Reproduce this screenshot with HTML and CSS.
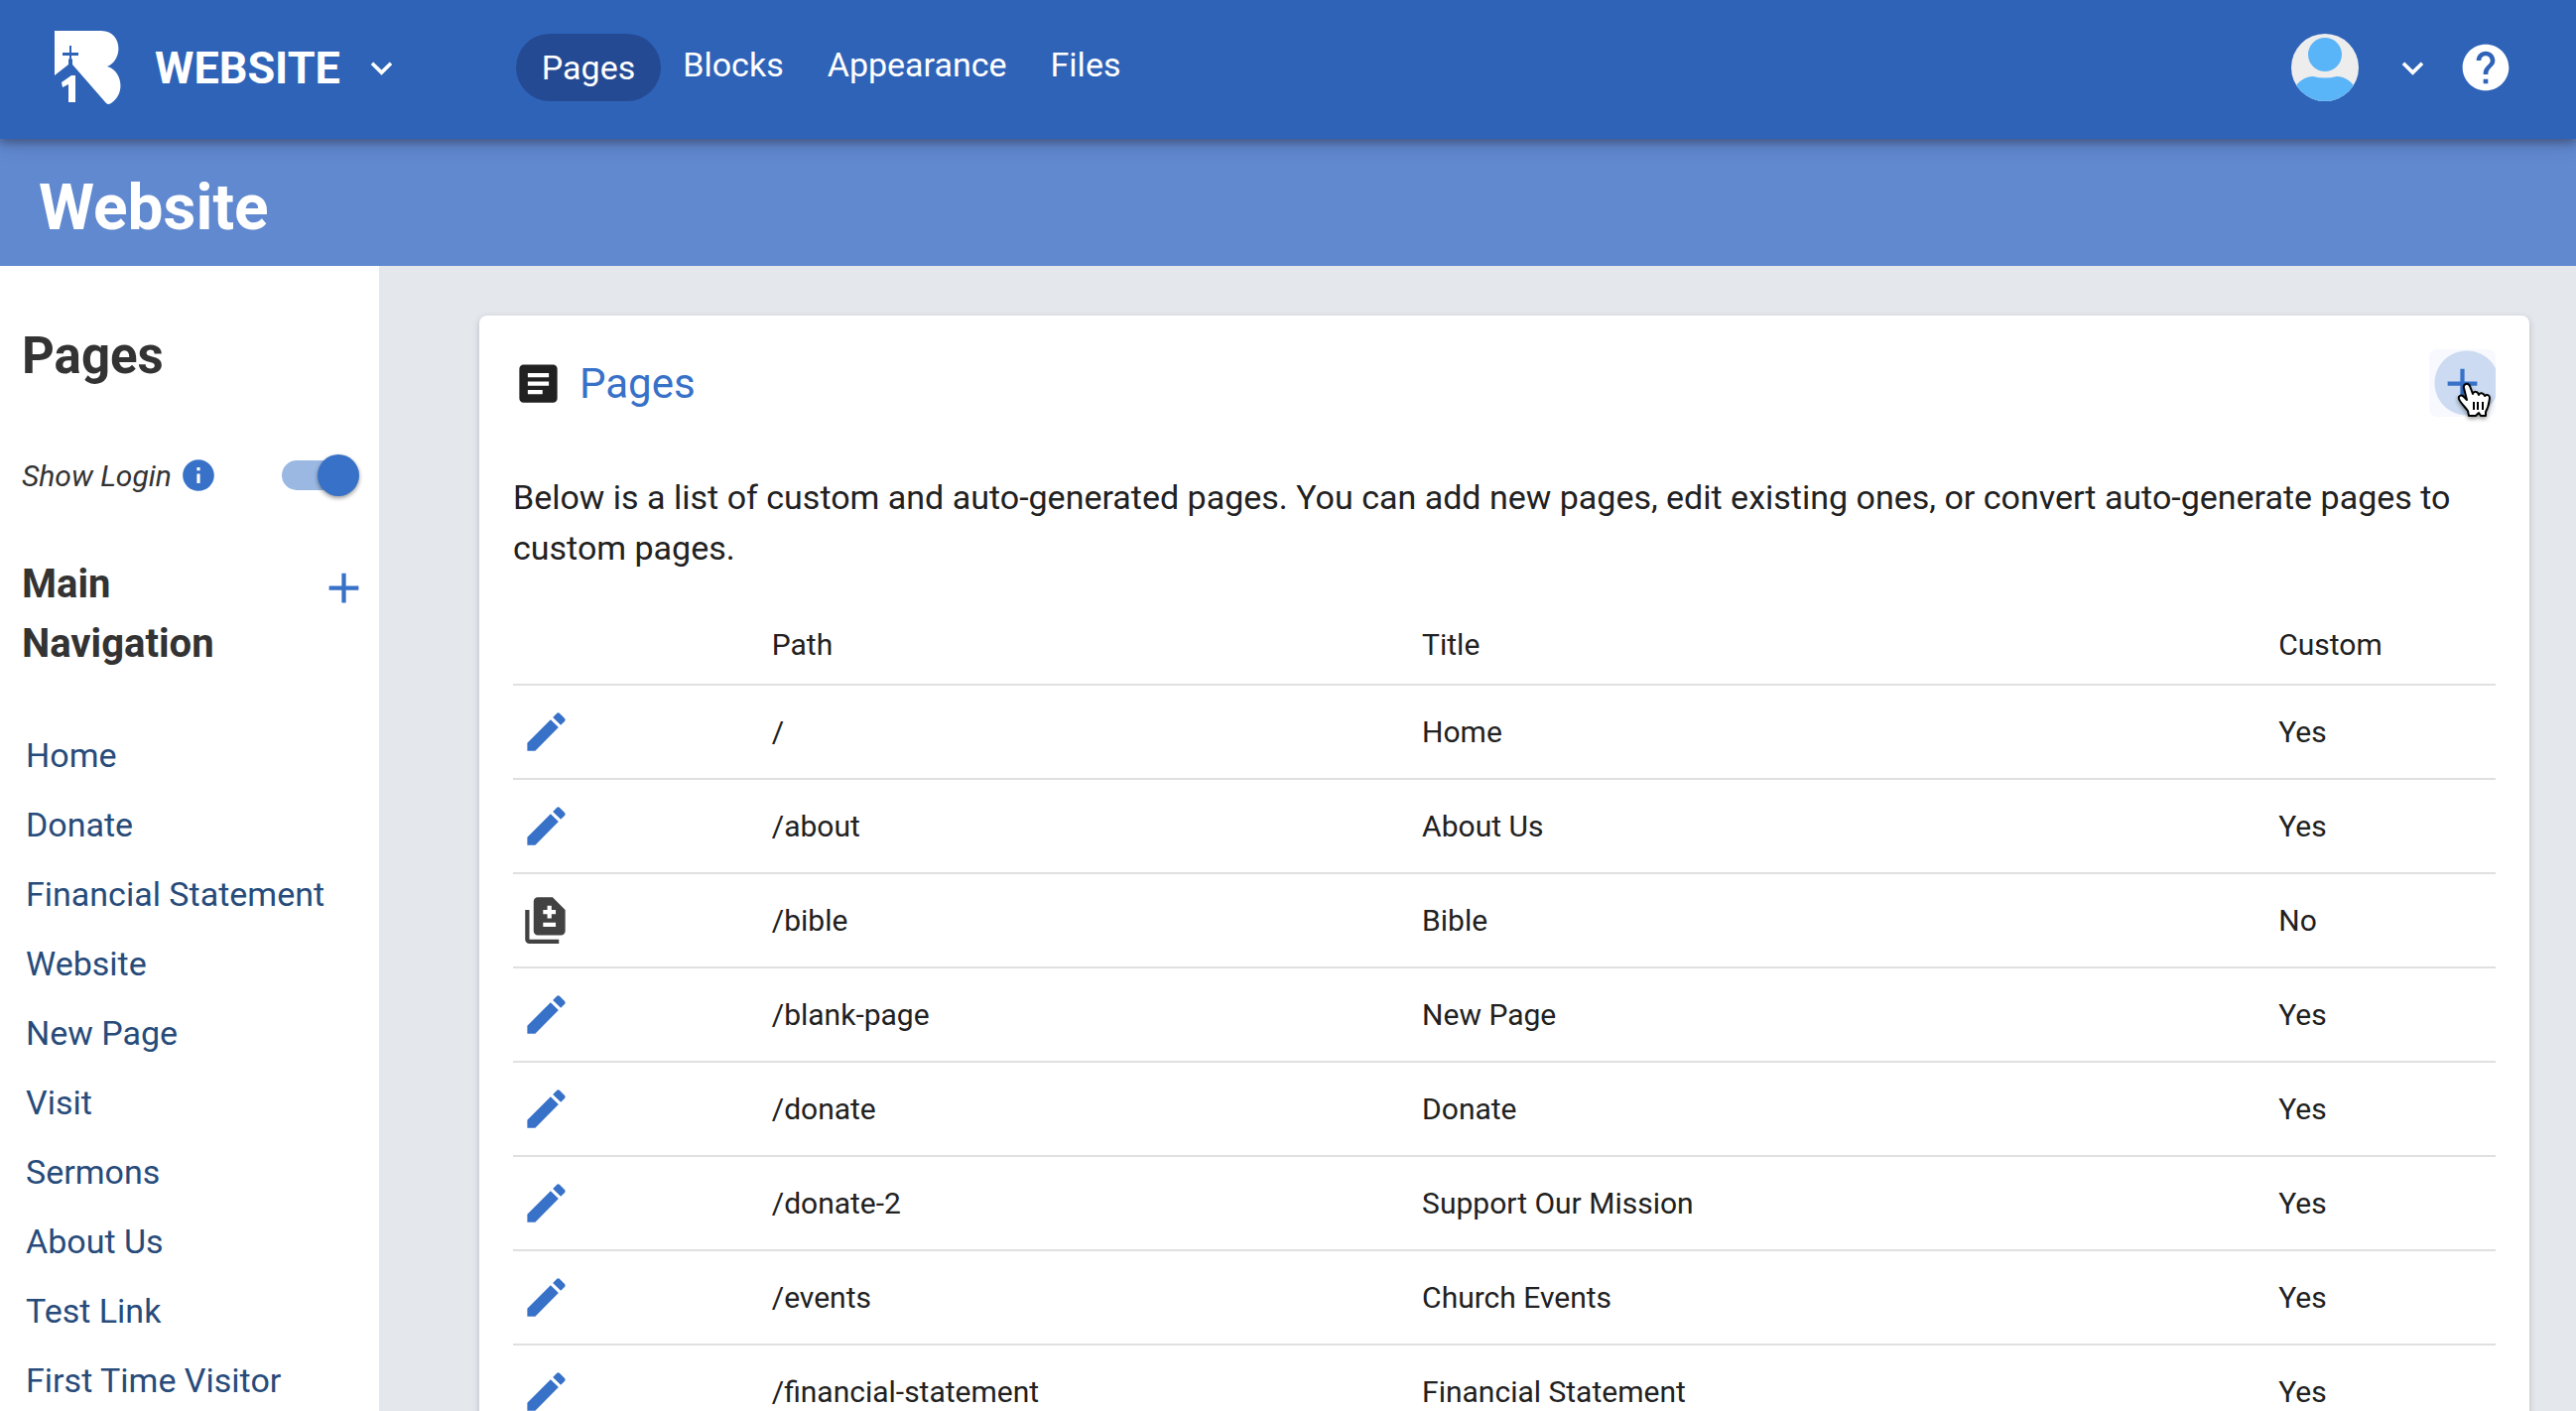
FILE: index.html
```html
<!DOCTYPE html>
<html lang="en">
<head>
<meta charset="utf-8">
<title>Website - Pages</title>
<link rel="stylesheet" href="styles.css">
</head>
<body>
<svg class="sprite" aria-hidden="true">
  <symbol id="edit" viewBox="0 0 24 24"><path d="M3 17.25V21h3.75L17.81 9.94l-3.75-3.75L3 17.25zM20.71 7.04c.39-.39.39-1.02 0-1.41l-2.34-2.34a.9959.9959 0 0 0-1.41 0l-1.83 1.83 3.75 3.75 1.83-1.83z"/></symbol>
  <symbol id="difference" viewBox="0 0 24 24"><path d="M18 23H4c-1.1 0-2-.9-2-2V7h2v14h14v2zM15 1H8c-1.1 0-1.99.9-1.99 2L6 17c0 1.1.89 2 1.99 2H19c1.1 0 2-.9 2-2V7l-6-6zm1.500 14h-6v-2h6v2zm0-6h-2v2h-2V9h-2V7h2V5h2v2h2v2z"/></symbol>
  <symbol id="add" viewBox="0 0 24 24"><path d="M19 13h-6v6h-2v-6H5v-2h6V5h2v6h6v2z"/></symbol>
  <symbol id="chevron" viewBox="0 0 24 24"><path d="M7.410 8.590 12 13.170l4.590-4.580L18 10l-6 6-6-6 1.410-1.410z"/></symbol>
</svg>

<header class="topbar">
  <button class="brand" type="button">
    <svg class="logo" viewBox="0 0 70 76" aria-hidden="true">
      <path fill="#fff" d="M1 1h47c21 0 23 29 6 36 15 4 19 27 4 37q-3 2-5 0L19 35v-5l-2-2-2 2v5L1 46z"/>
      <path fill="#2f63b8" d="M16 16h2v7h7v3h-7v6h-2v-6H9v-3h7z"/>
      <path fill="#fff" d="M22 46v27h-7V55l-6 3-1-5 10-7z"/>
    </svg>
    <span class="brand-name">WEBSITE</span>
    <svg class="icon-chevron" aria-hidden="true"><use href="#chevron"/></svg>
  </button>
  <nav class="tabs" aria-label="Primary">
    <a class="tab tab-active" href="#pages">Pages</a>
    <a class="tab" href="#blocks">Blocks</a>
    <a class="tab" href="#appearance">Appearance</a>
    <a class="tab" href="#files">Files</a>
  </nav>
  <div class="account">
    <button class="user" type="button" aria-label="Account menu">
      <svg class="avatar" viewBox="0 0 68 68" aria-hidden="true">
        <clipPath id="face"><circle cx="34" cy="34" r="34"/></clipPath>
        <g clip-path="url(#face)"><path fill="#ededed" d="M0 0h68v68H0z"/><circle cx="34" cy="21" r="17" fill="#5ab4f8"/><path fill="#5ab4f8" d="M0 60C6 48 14 43 22 43q12 3 24 0c8 0 16 5 22 17v8H0z"/></g>
      </svg>
      <svg class="icon-chevron" aria-hidden="true"><use href="#chevron"/></svg>
    </button>
    <button class="help" type="button" aria-label="Help">
      <svg viewBox="0 0 24 24" aria-hidden="true"><path d="M12 2C6.480 2 2 6.480 2 12s4.480 10 10 10 10-4.480 10-10S17.520 2 12 2zm1 17h-2v-2h2v2zm2.070-7.750-.9.920C13.450 12.900 13 13.500 13 15h-2v-.5c0-1.100.450-2.100 1.170-2.830l1.240-1.260c.37-.36.590-.86.590-1.410 0-1.100-.9-2-2-2s-2 .9-2 2H8c0-2.210 1.790-4 4-4s4 1.790 4 4c0 .88-.36 1.680-.93 2.250z"/></svg>
    </button>
  </div>
</header>

<div class="banner"><h1>Website</h1></div>

<div class="layout">
  <aside class="sidebar">
    <h2>Pages</h2>
    <div class="login-row">
      <label for="show-login">Show Login</label>
      <svg class="icon-info" viewBox="0 0 24 24" aria-hidden="true"><path d="M12 2C6.480 2 2 6.480 2 12s4.480 10 10 10 10-4.480 10-10S17.520 2 12 2zm1 15h-2v-6h2v6zm0-8h-2V7h2v2z"/></svg>
      <input class="switch" id="show-login" type="checkbox" role="switch" checked>
    </div>
    <div class="nav-head">
      <h3>Main Navigation</h3>
      <button class="add-link" type="button" aria-label="Add navigation link"><svg class="icon" aria-hidden="true"><use href="#add"/></svg></button>
    </div>
    <nav class="links" aria-label="Main navigation">
      <a href="#home">Home</a>
      <a href="#donate">Donate</a>
      <a href="#financial">Financial Statement</a>
      <a href="#website">Website</a>
      <a href="#new">New Page</a>
      <a href="#visit">Visit</a>
      <a href="#sermons">Sermons</a>
      <a href="#about">About Us</a>
      <a href="#test">Test Link</a>
      <a href="#first">First Time Visitor</a>
    </nav>
  </aside>

  <main class="content">
    <section class="card">
      <div class="card-head">
        <svg class="icon icon-article" viewBox="0 0 24 24" aria-hidden="true"><path d="M19 3H5c-1.100 0-2 .9-2 2v14c0 1.100.9 2 2 2h14c1.100 0 2-.9 2-2V5c0-1.100-.9-2-2-2zm-5 14H7v-2h7v2zm3-4H7v-2h10v2zm0-4H7V7h10v2z"/></svg>
        <h2>Pages</h2>
        <button class="add-page" type="button" aria-label="Add page">
          <svg class="icon" aria-hidden="true"><use href="#add"/></svg>
          <svg class="pointer" viewBox="0 0 34 38" aria-hidden="true"><path fill="#fff" stroke="#000" stroke-width="2" stroke-linejoin="round" d="M12 34l-1-5C7 24 3 20 2 17c-1-3 2-4 4-3l4 4L7 6C6 2 11 0 13 4l3 8c1-3 5-3 6 1 1-3 5-2 6 1 2-2 5-1 5 2-1 7-1 9-4 14v4h-5l-2-3-3 3z"/><path stroke="#000" stroke-width="2" d="M17 20v8M21 20v8M26 20v8"/></svg>
        </button>
      </div>
      <p class="intro">Below is a list of custom and auto-generated pages. You can add new pages, edit existing ones, or convert auto-generate pages to custom pages.</p>
      <table class="pages">
        <thead><tr><th class="col-action" aria-label="Action"></th><th class="col-path">Path</th><th class="col-title">Title</th><th class="col-custom">Custom</th></tr></thead>
        <tbody>
          <tr><td><button type="button" aria-label="Edit"><svg class="icon"><use href="#edit"/></svg></button></td><td>/</td><td>Home</td><td>Yes</td></tr>
          <tr><td><button type="button" aria-label="Edit"><svg class="icon"><use href="#edit"/></svg></button></td><td>/about</td><td>About Us</td><td>Yes</td></tr>
          <tr><td><button class="convert" type="button" aria-label="Convert"><svg class="icon"><use href="#difference"/></svg></button></td><td>/bible</td><td>Bible</td><td>No</td></tr>
          <tr><td><button type="button" aria-label="Edit"><svg class="icon"><use href="#edit"/></svg></button></td><td>/blank-page</td><td>New Page</td><td>Yes</td></tr>
          <tr><td><button type="button" aria-label="Edit"><svg class="icon"><use href="#edit"/></svg></button></td><td>/donate</td><td>Donate</td><td>Yes</td></tr>
          <tr><td><button type="button" aria-label="Edit"><svg class="icon"><use href="#edit"/></svg></button></td><td>/donate-2</td><td>Support Our Mission</td><td>Yes</td></tr>
          <tr><td><button type="button" aria-label="Edit"><svg class="icon"><use href="#edit"/></svg></button></td><td>/events</td><td>Church Events</td><td>Yes</td></tr>
          <tr><td><button type="button" aria-label="Edit"><svg class="icon"><use href="#edit"/></svg></button></td><td>/financial-statement</td><td>Financial Statement</td><td>Yes</td></tr>
        </tbody>
      </table>
    </section>
  </main>
</div>
</body>
</html>
```
FILE: styles.css
```css
* { box-sizing: border-box; }

html, body { height: 100%; }

body {
  display: flex;
  flex-direction: column;
  margin: 0;
  overflow: hidden;
  background: #e4e7ec;
  color: #212121;
  font-family: Roboto, "Liberation Sans", sans-serif;
  font-size: 34px;
}

h1, h2, h3, p { margin: 0; }
a { color: inherit; text-decoration: none; }
button {
  padding: 0;
  border: 0;
  background: none;
  color: inherit;
  font: inherit;
  cursor: pointer;
}
svg { display: block; flex: none; fill: currentColor; }
.sprite { position: absolute; width: 0; height: 0; }
.icon { width: 51px; height: 51px; }

/* Top bar */
.topbar {
  position: relative;
  z-index: 1;
  display: flex;
  flex: none;
  align-items: center;
  height: 140px;
  padding: 0 63px 4px 54px;
  background: #2f63b8;
  color: #fff;
  box-shadow: 0 4px 9px rgba(40, 40, 60, .45), 0 4px 20px rgba(40, 40, 60, .15);
}
.brand { display: flex; align-items: center; }
.logo { width: 70px; height: 76px; margin-right: 32px; }
.brand-name { font-size: 45px; font-weight: 700; }
.icon-chevron { width: 43px; height: 43px; }
.brand .icon-chevron { margin-left: 20px; }
.tabs { display: flex; align-items: center; margin-left: 114px; }
.tab { padding: 0 22px 6px; line-height: 62px; }
.tab-active { padding: 0 26px; border-radius: 34px; background: #244a94; line-height: 68px; }
.account { display: flex; align-items: center; margin-left: auto; }
.user { display: flex; align-items: center; }
.avatar { width: 68px; height: 68px; margin-right: 33px; }
.help { margin-left: 24px; }
.help svg { width: 56px; height: 56px; }

.banner {
  flex: none;
  padding: 28px 39px 16px;
  background: #6189d0;
  color: #fff;
}
.banner h1 { font-size: 64px; line-height: 84px; }

/* Sidebar */
.layout { display: flex; flex: 1; align-items: stretch; min-height: 0; }
.sidebar { flex: none; width: 382px; background: #fff; color: #333; }
.sidebar h2 { padding: 59px 22px 0; font-size: 51px; line-height: 64px; }
.login-row { display: flex; align-items: center; height: 60px; margin-top: 58px; padding: 0 22px; }
.login-row label { font-size: 30px; font-style: italic; }
.icon-info { width: 38px; height: 38px; margin-left: 8px; color: #3771c8; }
.switch {
  position: relative;
  appearance: none;
  width: 76px;
  height: 30px;
  margin: 0 0 0 auto;
  border-radius: 15px;
  background: #9bb8e3;
}
.switch::before {
  content: "";
  position: absolute;
  top: -6px;
  right: -2px;
  width: 42px;
  height: 42px;
  border-radius: 50%;
  background: #3771c8;
  box-shadow: 0 2px 4px rgba(0, 0, 0, .4);
}
.nav-head { display: flex; justify-content: space-between; align-items: flex-start; margin-top: 50px; padding: 0 10px 0 22px; }
.nav-head h3 { width: 220px; font-size: 40px; line-height: 60px; }
.add-link { padding-top: 8px; color: #3771c8; }
.links { display: flex; flex-direction: column; margin-top: 47px; padding-left: 26px; color: #274b7a; line-height: 70px; }

/* Content card */
.content { flex: 1; min-width: 0; padding: 50px 47px 0 101px; }
.card {
  padding: 34px 34px 0;
  border-radius: 8px;
  background: #fff;
  box-shadow: 0 2px 6px rgba(60, 60, 80, .25);
}
.card-head { display: flex; align-items: center; height: 68px; }
.card-head h2 { margin-left: 16px; color: #3771c8; font-size: 42px; font-weight: 400; }
.add-page {
  position: relative;
  display: flex;
  align-items: center;
  justify-content: center;
  width: 67px;
  height: 68px;
  margin-left: auto;
  border-radius: 8px;
  background: radial-gradient(circle at 38px 34px, #ccdbf1 32px, #f7f9fe 33px);
  color: #3771c8;
}
.pointer { position: absolute; top: 33px; left: 28px; width: 34px; height: 38px; filter: drop-shadow(0 2px 2px rgba(0, 0, 0, .4)); }
.intro { margin-top: 56px; line-height: 51px; }

.pages { width: 100%; margin-top: 32px; border-collapse: collapse; table-layout: fixed; font-size: 30px; text-align: left; }
.pages th { height: 80px; padding: 0 33px; border-bottom: 2px solid #e0e0e0; font-weight: 400; }
.pages td { height: 95px; padding: 0 33px; border-bottom: 2px solid #e0e0e0; }
.pages td:first-child { padding: 0 8px; }
.pages button { display: block; color: #3771c8; }
.pages .convert { color: #424242; }
.col-action { width: 11.4%; }
.col-path { width: 32.8%; }
.col-title { width: 43.2%; }
```
